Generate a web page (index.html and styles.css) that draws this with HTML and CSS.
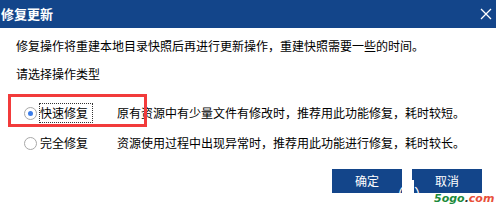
FILE: index.html
```html
<!DOCTYPE html>
<html>
<head>
<meta charset="utf-8">
<link rel="stylesheet" href="styles.css">
</head>
<body>
<div class="dialog">
  <div class="titlebar">
    <span class="title">修复更新</span>
    <svg class="close" width="12" height="12" viewBox="0 0 12 12"><path d="M1 1L11 11M11 1L1 11" stroke="#fff" stroke-width="1.3"/></svg>
  </div>
  <div class="content">
    <p class="line first">修复操作将重建本地目录快照后再进行更新操作，重建快照需要一些的时间。</p>
    <p class="line second">请选择操作类型</p>
    <div class="options">
      <div class="option">
        <span class="radio checked"><span class="dot"></span></span>
        <span class="label focus">快速修复</span>
        <span class="desc">原有资源中有少量文件有修改时，推荐用此功能修复，耗时较短。</span>
      </div>
      <div class="option">
        <span class="radio"></span>
        <span class="label">完全修复</span>
        <span class="desc">资源使用过程中出现异常时，推荐用此功能进行修复，耗时较长。</span>
      </div>
    </div>
  </div>
  <div class="buttons">
    <div class="btn">确定</div>
    <div class="btn">取消</div>
  </div>
  <div class="highlight"></div>
  <div class="watermark"><span class="wm-paren">（</span><span class="wm-block"></span><span class="wm-paren">）</span><span class="wm-site"><span class="g">5ogo</span><span class="d">.</span><span class="r">com</span></span></div>
</div>
</body>
</html>
```
FILE: styles.css
```css
html, body {
  margin: 0;
  padding: 0;
  background: #fff;
}
.dialog {
  position: relative;
  width: 496px;
  height: 214px;
  overflow: hidden;
  font-family: "Noto Sans CJK SC", "DejaVu Sans", sans-serif;
  font-size: 12px;
  color: #000;
}
.titlebar {
  height: 28px;
  background: #13458a;
  display: flex;
  align-items: center;
  justify-content: space-between;
  padding: 0 4px 0 1px;
  box-sizing: border-box;
}
.title {
  color: #fff;
  font-weight: bold;
  font-size: 13px;
  line-height: 16px;
}
.close {
  display: block;
}
.content {
  padding: 0 0 0 16px;
}
.line {
  margin: 0;
  line-height: 16px;
  white-space: nowrap;
}
.first {
  margin-top: 10px;
}
.second {
  margin-top: 12px;
}
.options {
  margin-top: 21px;
  display: flex;
  flex-direction: column;
  gap: 10px;
}
.option {
  display: flex;
  align-items: center;
  height: 20px;
  white-space: nowrap;
}
.radio {
  width: 11px;
  height: 11px;
  border: 1px solid #a8a8a8;
  border-radius: 50%;
  margin-left: 8px;
  box-sizing: content-box;
  display: flex;
  align-items: center;
  justify-content: center;
  background: #fff;
}
.dot {
  width: 5px;
  height: 5px;
  border-radius: 50%;
  background: #3b7de8;
}
.label {
  margin-left: 2px;
  width: 52px;
  height: 18px;
  line-height: 18px;
  border: 1px dotted transparent;
  box-sizing: content-box;
}
.label.focus {
  border-color: #333;
}
.desc {
  margin-left: 24px;
  line-height: 16px;
}
.buttons {
  margin-top: 16px;
  display: flex;
  justify-content: flex-end;
  gap: 10px;
  padding-right: 14px;
}
.btn {
  width: 70px;
  height: 24px;
  background: #13458a;
  color: #fff;
  font-size: 12px;
  line-height: 24px;
  text-align: center;
}
.highlight {
  position: absolute;
  left: 8px;
  top: 94px;
  width: 139px;
  height: 33px;
  border: 3px solid #f23b3b;
  box-sizing: border-box;
}
.watermark {
  position: absolute;
  left: 388px;
  top: 180px;
  display: flex;
  align-items: center;
  height: 26px;
}
.wm-paren {
  color: #fff;
  font-size: 16px;
  line-height: 26px;
}
.wm-block {
  width: 10px;
  height: 26px;
  background: #fff;
}
.wm-site {
  position: absolute;
  left: 46px;
  top: 12px;
  font-family: "DejaVu Sans", sans-serif;
  font-size: 11px;
  line-height: 13px;
  font-style: italic;
  font-weight: bold;
  white-space: nowrap;
}
.g { color: #1c8a3a; }
.d { color: #333; }
.r { color: #e8503a; }
```
